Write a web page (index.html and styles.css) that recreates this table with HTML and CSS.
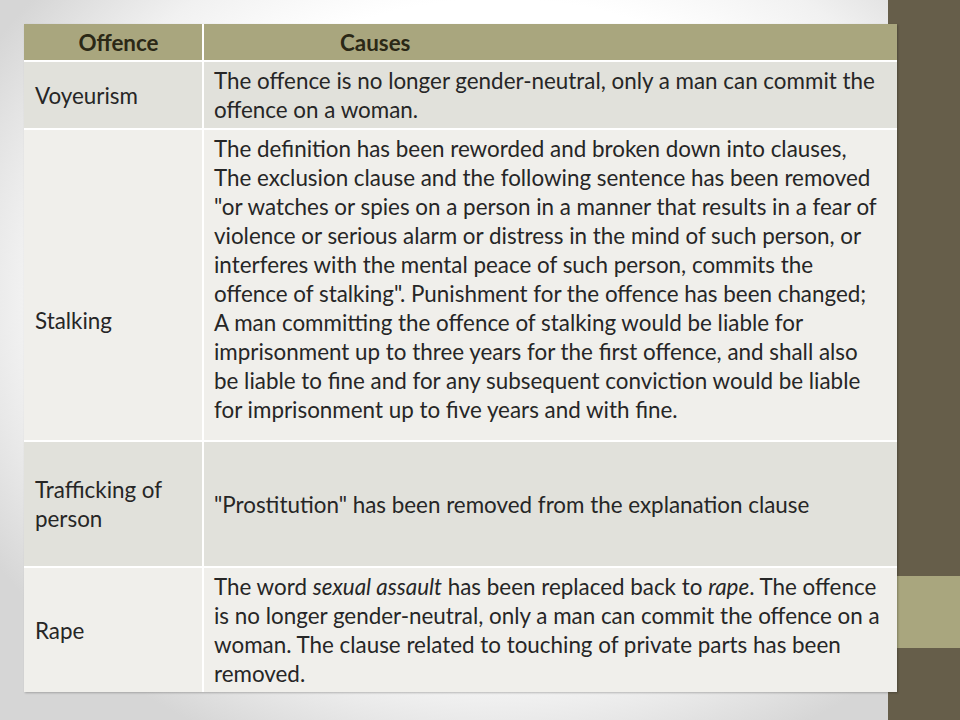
FILE: index.html
```html
<!DOCTYPE html>
<html lang="en">
<head>
<meta charset="utf-8">
<title>Offences and Causes</title>
<link rel="stylesheet" href="styles.css">
</head>
<body>
<div class="slide">
  <main class="content">
    <table class="grid">
      <colgroup>
        <col class="col-offence">
        <col class="col-causes">
      </colgroup>
      <thead>
        <tr class="head">
          <th class="th-offence">Offence</th>
          <th class="th-causes">Causes</th>
        </tr>
      </thead>
      <tbody>
        <tr class="row-dark row-voy">
          <td>Voyeurism</td>
          <td>The offence is no longer gender-neutral, only a man can commit the offence on a woman.</td>
        </tr>
        <tr class="row-light row-stalk">
          <td class="stalk-label">Stalking</td>
          <td class="stalk-text">The definition has been reworded and broken down into clauses,<br>The exclusion clause and the following sentence has been removed "or watches or spies on a person in a manner that results in a fear of violence or serious alarm or distress in the mind of such person, or interferes with the mental peace of such person, commits the offence of stalking". Punishment for the offence has been changed; A man committing the offence of stalking would be liable for imprisonment up to three years for the first offence, and shall also be liable to fine and for any subsequent conviction would be liable for imprisonment up to five years and with fine.</td>
        </tr>
        <tr class="row-dark row-traf">
          <td>Trafficking of person</td>
          <td>"Prostitution" has been removed from the explanation clause</td>
        </tr>
        <tr class="row-light row-rape">
          <td>Rape</td>
          <td>The word <em>sexual assault</em> has been replaced back to <em>rape</em>. The offence is no longer gender-neutral, only a man can commit the offence on a woman. The clause related to touching of private parts has been removed.</td>
        </tr>
      </tbody>
    </table>
  </main>
  <aside class="rail">
    <div class="rail-top"></div>
    <div class="rail-accent"></div>
    <div class="rail-bottom"></div>
  </aside>
</div>
</body>
</html>
```

FILE: styles.css
```css
html, body {
  margin: 0;
  padding: 0;
}

body {
  width: 960px;
  height: 720px;
  overflow: hidden;
  font-family: Lato, "Open Sans", sans-serif;
  color: #262626;
}

.slide {
  display: flex;
  width: 960px;
  height: 720px;
  background:
    radial-gradient(ellipse 62% 68% at 52% 42%, #ffffff 62%, #f1f1f1 80%, #d6d6d6 100%);
}

.content {
  flex: 0 0 888px;
  min-width: 0;
  padding: 24px 0 0 24px;
  box-sizing: border-box;
  position: relative;
  z-index: 1;
}

.rail {
  flex: 1;
  display: flex;
  flex-direction: column;
  background: #665e4a;
}

.rail-top {
  height: 576px;
}

.rail-accent {
  height: 72px;
  background: #a9a67e;
}

.rail-bottom {
  flex: 1;
}

.grid {
  width: 873px;
  border-collapse: collapse;
  table-layout: fixed;
  font-size: 22.4px;
  line-height: 29px;
  box-shadow: 1px 1px 2px rgba(0, 0, 0, 0.25);
}

.col-offence {
  width: 179px;
}

.grid th,
.grid td {
  border: 2px solid #ffffff;
  vertical-align: middle;
  text-align: left;
  padding: 4px 14px 4px 10px;
}

.grid tr:first-child th,
.grid tr:first-child td {
  border-top: 0;
}

.grid th:first-child,
.grid td:first-child {
  border-left: 0;
  padding-left: 11px;
}

.grid th:last-child,
.grid td:last-child {
  border-right: 0;
}

.grid tbody tr:last-child td {
  border-bottom: 0;
}

.head th {
  background: #a9a67e;
  color: #2b2816;
  font-weight: 700;
  height: 30px;
  padding-top: 3px;
  padding-bottom: 3px;
}

.grid .th-offence {
  text-align: center;
  padding-left: 0;
  padding-right: 0;
}

.grid .th-causes {
  padding-left: 136px;
}

.row-dark td {
  background: #e1e1db;
}

.row-light td {
  background: #f0efeb;
}

.row-voy td {
  height: 58px;
}

.grid .stalk-text {
  padding-bottom: 16px;
}

.grid .stalk-label {
  vertical-align: top;
  padding-top: 176px;
}

.row-traf td {
  height: 116px;
}

.row-rape td {
  height: 116px;
}

em {
  font-style: italic;
}
```
